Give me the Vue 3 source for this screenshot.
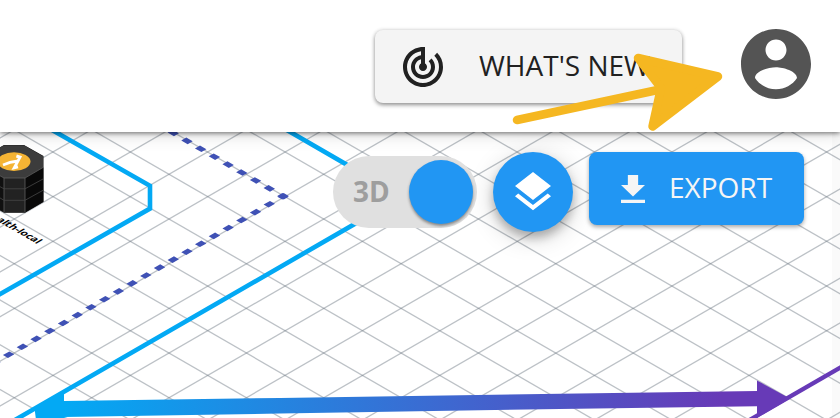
<script setup>
const stepX = 38.68
const stepY = 22.34
const originX = 14.3
const originY = 263.7
const reach = 20
const gridLines = []
for (let i = -14; i <= 24; i++) {
  const x = originX + i * stepX * 2
  const x1 = x - reach * stepX
  const x2 = x + reach * stepX
  const top = originY - reach * stepY
  const bottom = originY + reach * stepY
  gridLines.push({ x1, y1: top, x2, y2: bottom })
  gridLines.push({ x1, y1: bottom, x2, y2: top })
}
</script>

<template>
  <div class="app">
    <svg class="canvas" viewBox="0 0 840 418" width="840" height="418">
      <defs>
        <linearGradient id="flow" gradientUnits="userSpaceOnUse" x1="64" y1="400" x2="720" y2="400">
          <stop offset="0" stop-color="#03a9f4" />
          <stop offset="1" stop-color="#673ab7" />
        </linearGradient>
      </defs>
      <rect class="gutter" x="832" y="0" width="8" height="418" />
      <g class="grid">
        <line v-for="(l, i) in gridLines" :key="i" :x1="l.x1" :y1="l.y1" :x2="l.x2" :y2="l.y2" />
      </g>
      <g class="dashes">
        <line transform="matrix(.866 .5 -.866 .5 283 196.3)" x1="-162.1" y1="0" x2="4" y2="0" />
        <line transform="matrix(-.866 .5 .866 .5 283 196.3)" x1="-3.7" y1="0" x2="400" y2="0" />
      </g>
      <g class="zones">
        <path d="M38 122 150 185.8V208.6L-4 296.5" />
        <path d="M273 122 390 189.7V203.6L8 424" />
        <path class="violet" d="M844 365.4 746 422" />
      </g>
      <path fill="url(#flow)" d="M35 408 64 391V401L280 398 560 393.7 757 391V380.5L790 398.5 757 418V406.2L560 409 280 413.5 64 417 75 420H36L35 412Z" />

      <g>
        <path fill="#101010" d="M-16 156 4 145H24L43.5 156V202L25 212.7H4L-16 202Z" />
        <path fill="#3c3c3c" d="M-16 156 4 145.3H24L43 156.3V167.5L25 178H4L-16 167Z" />
        <path fill="#222" d="M4 178H25V212.3H4Z" />
        <path fill="#090909" d="M25 178 43.3 167.5V201.8L25 212.4Z" />
        <path class="edges" d="M-5 173 4 178H25L43 167.5M4 178V212M25 178V212" />
        <path class="seams" d="M-5 184 4 188.8H25L43 179M-5 195 4 200.3H25L43 190.3" />
        <ellipse cx="14" cy="161.6" rx="16.5" ry="9.3" fill="#f5b434" />
        <path class="lambda" d="M16.4 156 20 157.2 14.3 167.8 18 166.8M18 161 10 162.3 3 165" />
      </g>
      <text class="label" transform="matrix(.866 .5 -.866 .5 37 244)" text-anchor="end">ealth-local</text>
    </svg>

    <header class="topbar">
      <button class="news">
        <svg viewBox="0 0 24 24" width="48" height="48"><path fill="#212121" d="M19.07 4.93l-1.41 1.41A8.014 8.014 0 0 1 20 12c0 4.42-3.58 8-8 8s-8-3.58-8-8c0-4.08 3.05-7.44 7-7.93v2.02C8.16 6.57 6 9.03 6 12c0 3.31 2.69 6 6 6s6-2.69 6-6c0-1.66-.67-3.16-1.76-4.24l-1.41 1.41C15.55 9.9 16 10.9 16 12c0 2.21-1.79 4-4 4s-4-1.79-4-4c0-1.86 1.28-3.41 3-3.86v2.14c-.6.35-1 .98-1 1.72 0 1.1.9 2 2 2s2-.9 2-2c0-.74-.4-1.38-1-1.72V2h-1C6.48 2 2 6.48 2 12s4.48 10 10 10 10-4.48 10-10c0-2.76-1.12-5.26-2.93-7.07z" /></svg>
        <span>WHAT'S NEW</span>
      </button>
      <svg class="account" viewBox="2 2 20 20" width="70" height="70"><path fill="#545454" d="M12 2C6.48 2 2 6.48 2 12s4.48 10 10 10 10-4.48 10-10S17.52 2 12 2zm0 3c1.66 0 3 1.34 3 3s-1.34 3-3 3-3-1.34-3-3 1.34-3 3-3zm0 14.2c-2.5 0-4.71-1.28-6-3.22.03-1.99 4-3.08 6-3.08 1.99 0 5.97 1.09 6 3.08-1.29 1.94-3.5 3.22-6 3.22z" /></svg>
    </header>

    <div class="tools">
      <div class="toggle"><span>3D</span><i class="knob"></i></div>
      <button class="layers">
        <svg viewBox="0 0 24 24" width="48" height="48"><path fill="#fff" d="M11.99 18.54l-7.37-5.73L3 14.07l9 7 9-7-1.63-1.27-7.38 5.74zM12 16l7.36-5.73L21 9l-9-7-9 7 1.63 1.27L12 16z" /></svg>
      </button>
      <button class="export">
        <svg viewBox="5 3 14 17" width="24" height="28" preserveAspectRatio="none"><path fill="#f5f5f5" d="M19 9h-4V3H9v6H5l7 7 7-7zM5 18v2h14v-2H5z" /></svg>
        <span>EXPORT</span>
      </button>
    </div>

    <svg class="pointer" viewBox="0 0 840 418" width="840" height="418">
      <path class="shaft" d="M517 120 660 89.5" />
      <path class="head" d="M638 58 718 76.5 652.5 126.5 661 88Z" />
    </svg>
  </div>
</template>

<style>
body {
  margin: 0;
  overflow: hidden;
}
</style>

<style scoped>
.app {
  position: relative;
  width: 840px;
  height: 418px;
  overflow: hidden;
  background: #fff;
  font-family: "Open Sans", "Noto Sans", sans-serif;
}
.canvas,
.pointer {
  position: absolute;
  inset: 0;
}
.pointer {
  z-index: 3;
  pointer-events: none;
}
.gutter {
  fill: #fafafa;
}
.grid {
  stroke: #6b7580;
  stroke-opacity: 0.45;
  stroke-width: 1.3;
}
.dashes {
  stroke: #3f51b5;
  stroke-width: 5.8;
  stroke-dasharray: 7.4 8.44;
}
.zones {
  fill: none;
  stroke: #03a9f4;
  stroke-width: 4.6;
}
.zones .violet {
  stroke: #673ab7;
  stroke-width: 4.2;
}
.edges,
.seams {
  fill: none;
  stroke: #606060;
  stroke-width: 0.8;
}
.seams {
  stroke: #484848;
}
.lambda {
  fill: none;
  stroke: #fff;
  stroke-width: 2.9;
}
.label {
  font: 700 10.2px "Open Sans", sans-serif;
  fill: #000;
}
.topbar {
  position: relative;
  z-index: 2;
  box-sizing: border-box;
  display: flex;
  align-items: flex-start;
  justify-content: flex-end;
  gap: 59px;
  height: 132px;
  padding: 29px 29px 0 0;
  background: #fff;
  box-shadow: 0 1px 5px rgba(0, 0, 0, 0.55), 0 4px 16px rgba(0, 0, 0, 0.12);
}
button {
  display: flex;
  align-items: center;
  box-sizing: border-box;
  border: 0;
  margin: 0;
  font-family: inherit;
}
button span {
  padding-bottom: 3px;
}
.news {
  width: 307px;
  height: 73px;
  margin-top: 1px;
  padding: 0 0 0 24px;
  gap: 32px;
  border-radius: 8px;
  background: #f4f4f4;
  color: #212121;
  font-size: 28px;
  white-space: nowrap;
  box-shadow: 0 2px 4px rgba(0, 0, 0, 0.4), 0 0 4px rgba(0, 0, 0, 0.12);
}
.tools {
  position: relative;
  z-index: 1;
  display: flex;
  align-items: flex-start;
  gap: 16px;
  padding: 20px 0 0 333px;
}
.toggle {
  box-sizing: border-box;
  display: flex;
  align-items: center;
  justify-content: space-between;
  width: 144px;
  height: 72px;
  margin-top: 4px;
  padding: 0 4px 0 20px;
  border-radius: 36px;
  background: #e0e0e0;
  color: #9e9e9e;
  font-size: 28px;
  font-weight: 700;
}
.toggle span {
  padding-bottom: 2px;
}
.knob {
  width: 64px;
  height: 64px;
  border-radius: 50%;
  background: #2196f3;
  box-shadow: 0 2px 3px rgba(0, 0, 0, 0.4);
}
.layers {
  justify-content: center;
  width: 80px;
  height: 80px;
  padding: 0;
  border-radius: 50%;
  background: #2196f3;
  box-shadow: 0 6px 10px rgba(0, 0, 0, 0.25), 0 5px 26px rgba(0, 0, 0, 0.18);
}
.export {
  width: 215px;
  height: 73px;
  padding: 0 0 0 32px;
  gap: 24px;
  border-radius: 8px;
  background: #2196f3;
  color: #f5f5f5;
  font-size: 28px;
  box-shadow: 0 2px 4px rgba(0, 0, 0, 0.35);
}
.shaft {
  fill: none;
  stroke: #f5b721;
  stroke-width: 8.5;
  stroke-linecap: round;
}
.head {
  fill: #f5b721;
  stroke: #f5b721;
  stroke-width: 8.5;
  stroke-linejoin: round;
}
</style>
